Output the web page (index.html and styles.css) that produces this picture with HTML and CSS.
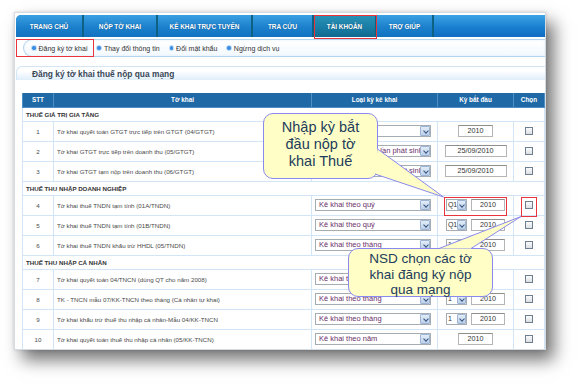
FILE: index.html
```html
<!DOCTYPE html>
<html lang="vi">
<head>
    <meta charset="UTF-8">
    <meta name="viewport" content="width=device-width, initial-scale=1.0">
    <title>Đăng ký tờ khai thuế nộp qua mạng</title>
    <link rel="stylesheet" href="styles.css">
</head>
<body>
    <div class="shot">
        <div class="nav">
            <a class="tab tab-home">TRANG CHỦ</a>
            <a class="tab tab-nop">NỘP TỜ KHAI</a>
            <a class="tab tab-kk">KÊ KHAI TRỰC TUYẾN</a>
            <a class="tab tab-tc">TRA CỨU</a>
            <a class="tab tab-tk active">TÀI KHOẢN</a>
            <a class="tab tab-help">TRỢ GIÚP</a>
            <span class="tab-fill"></span>
        </div>

        <div class="subnav">
            <span class="sub-item">Đăng ký tờ khai</span>
            <span class="sub-item">Thay đổi thông tin</span>
            <span class="sub-item">Đổi mật khẩu</span>
            <span class="sub-item">Ngừng dịch vụ</span>
        </div>

        <div class="main">
            <div class="title">Đăng ký tờ khai thuế nộp qua mạng</div>

            <table class="grid">
                <colgroup>
                    <col class="c-stt">
                    <col class="c-name">
                    <col class="c-type">
                    <col class="c-ky">
                    <col class="c-chk">
                </colgroup>
                <thead>
                    <tr>
                        <th>STT</th>
                        <th>Tờ khai</th>
                        <th>Loại kỳ kê khai</th>
                        <th>Kỳ bắt đầu</th>
                        <th>Chọn</th>
                    </tr>
                </thead>
                <tbody>
                    <tr class="group"><td colspan="5">THUẾ GIÁ TRỊ GIA TĂNG</td></tr>
                    <tr>
                        <td class="stt">1</td>
                        <td class="name">Tờ khai quyết toán GTGT trực tiếp trên GTGT (04/GTGT)</td>
                        <td class="type"><span class="sel wide"><span class="txt">Kê khai theo năm</span><span class="arr"></span></span></td>
                        <td class="ky"><span class="inp year">2010</span></td>
                        <td class="chk"><span class="cb"></span></td>
                    </tr>
                    <tr>
                        <td class="stt">2</td>
                        <td class="name">Tờ khai GTGT trực tiếp trên doanh thu (05/GTGT)</td>
                        <td class="type"><span class="sel wide"><span class="txt">Kê khai theo từng lần phát sinh</span><span class="arr"></span></span></td>
                        <td class="ky"><span class="inp date">25/09/2010</span></td>
                        <td class="chk"><span class="cb"></span></td>
                    </tr>
                    <tr>
                        <td class="stt">3</td>
                        <td class="name">Tờ khai GTGT tạm nộp trên doanh thu (06/GTGT)</td>
                        <td class="type"><span class="sel wide"><span class="txt">Kê khai theo từng lần phát sinh</span><span class="arr"></span></span></td>
                        <td class="ky"><span class="inp date">25/09/2010</span></td>
                        <td class="chk"><span class="cb"></span></td>
                    </tr>

                    <tr class="group"><td colspan="5">THUẾ THU NHẬP DOANH NGHIỆP</td></tr>
                    <tr>
                        <td class="stt">4</td>
                        <td class="name">Tờ khai thuế TNDN tạm tính (01A/TNDN)</td>
                        <td class="type"><span class="sel wide"><span class="txt">Kê khai theo quý</span><span class="arr"></span></span></td>
                        <td class="ky"><span class="pair"><span class="sel small"><span class="txt">Q1</span><span class="arr"></span></span><span class="inp short">2010</span></span></td>
                        <td class="chk"><span class="cb"></span></td>
                    </tr>
                    <tr>
                        <td class="stt">5</td>
                        <td class="name">Tờ khai thuế TNDN tạm tính (01B/TNDN)</td>
                        <td class="type"><span class="sel wide"><span class="txt">Kê khai theo quý</span><span class="arr"></span></span></td>
                        <td class="ky"><span class="pair"><span class="sel small"><span class="txt">Q1</span><span class="arr"></span></span><span class="inp short">2010</span></span></td>
                        <td class="chk"><span class="cb"></span></td>
                    </tr>
                    <tr>
                        <td class="stt">6</td>
                        <td class="name">Tờ khai thuế TNDN khấu trừ HHDL (05/TNDN)</td>
                        <td class="type"><span class="sel wide"><span class="txt">Kê khai theo tháng</span><span class="arr"></span></span></td>
                        <td class="ky"><span class="pair"><span class="sel small"><span class="txt">1</span><span class="arr"></span></span><span class="inp short">2010</span></span></td>
                        <td class="chk"><span class="cb"></span></td>
                    </tr>

                    <tr class="group"><td colspan="5">THUẾ THU NHẬP CÁ NHÂN</td></tr>
                    <tr>
                        <td class="stt">7</td>
                        <td class="name">Tờ khai quyết toán 04/TNCN (dùng QT cho năm 2008)</td>
                        <td class="type"><span class="sel wide"><span class="txt">Kê khai theo năm</span><span class="arr"></span></span></td>
                        <td class="ky"><span class="inp year">2010</span></td>
                        <td class="chk"><span class="cb"></span></td>
                    </tr>
                    <tr>
                        <td class="stt">8</td>
                        <td class="name">TK - TNCN mẫu 07/KK-TNCN theo tháng (Cá nhân tự khai)</td>
                        <td class="type"><span class="sel wide"><span class="txt">Kê khai theo tháng</span><span class="arr"></span></span></td>
                        <td class="ky"><span class="pair"><span class="sel small"><span class="txt">1</span><span class="arr"></span></span><span class="inp short">2010</span></span></td>
                        <td class="chk"><span class="cb"></span></td>
                    </tr>
                    <tr>
                        <td class="stt">9</td>
                        <td class="name">Tờ khai khấu trừ thuế thu nhập cá nhân-Mẫu 04/KK-TNCN</td>
                        <td class="type"><span class="sel wide"><span class="txt">Kê khai theo tháng</span><span class="arr"></span></span></td>
                        <td class="ky"><span class="pair"><span class="sel small"><span class="txt">1</span><span class="arr"></span></span><span class="inp short">2010</span></span></td>
                        <td class="chk"><span class="cb"></span></td>
                    </tr>
                    <tr>
                        <td class="stt">10</td>
                        <td class="name">Tờ khai quyết toán thuế thu nhập cá nhân (05/KK-TNCN)</td>
                        <td class="type"><span class="sel wide"><span class="txt">Kê khai theo năm</span><span class="arr"></span></span></td>
                        <td class="ky"><span class="inp year">2010</span></td>
                        <td class="chk"><span class="cb"></span></td>
                    </tr>
                </tbody>
            </table>
        </div>
    </div>

    <!-- red highlight frames -->
    <span class="mark mark-tab"></span>
    <span class="mark mark-sub"></span>
    <span class="mark mark-ky"></span>
    <span class="mark mark-chk"></span>

    <!-- callouts -->
    <div class="callout callout-ky">Nhập kỳ bắt<br>đầu nộp tờ<br>khai Thuế</div>
    <div class="callout callout-chk">NSD chọn các tờ<br>khai đăng ký nộp<br>qua mạng</div>
    <svg class="tails" width="581" height="386" viewBox="0 0 581 386">
        <path d="M377.5 149 L443.5 197 L375 174" fill="#fefec6" stroke="#8a8aee" stroke-width="1"/>
        <path d="M439 248.5 L521 216.5 L471 248.5" fill="#fefec6" stroke="#8a8aee" stroke-width="1"/>
    </svg>
</body>
</html>
```

FILE: styles.css
```css
* {
    margin: 0;
    padding: 0;
    box-sizing: border-box;
}

body {
    width: 581px;
    height: 386px;
    overflow: hidden;
    position: relative;
    background: #ffffff;
    font-family: "Liberation Sans", Arial, sans-serif;
    color: #333;
}

/* screenshot frame */
.shot {
    margin: 12px 0 0 14px;
    width: 532px;
    height: 338px;
    padding: 2px 0 0 1px;
    background: #fff;
    border: 1px solid #d5dbe2;
    box-shadow: 0 0 3px rgba(0, 0, 0, 0.15), 8px 10px 16px rgba(0, 0, 0, 0.55);
    overflow: hidden;
}

/* top menu */
.nav {
    display: flex;
    height: 22px;
    border-radius: 5px 0 0 0;
    overflow: hidden;
    background: linear-gradient(#3ea4e6, #1a7fd0 55%, #0f6cc2);
}

.tab {
    display: flex;
    align-items: center;
    justify-content: center;
    height: 100%;
    color: #fff;
    font-size: 6.4px;
    font-weight: bold;
    text-shadow: 0 0 1px rgba(0, 40, 80, 0.6);
    border-right: 2px solid #0d6283;
    background: linear-gradient(#3aa0e2, #1c80cc 55%, #1272c0);
}

.tab-home { width: 68px; }
.tab-nop { width: 74px; }
.tab-kk { width: 95px; }
.tab-tc { width: 61px; }
.tab-tk { width: 63px; }
.tab-help { width: 57px; }

.tab.active {
    background: linear-gradient(#2a93b8, #1a7ea6 55%, #12698f);
}

.tab-fill {
    flex: 1;
}

/* sub menu */
.subnav {
    display: flex;
    align-items: center;
    gap: 10px;
    height: 18px;
    margin: 2px 0 0 7px;
    padding-left: 8px;
    border: 1px solid #b4d5ef;
    border-right: none;
    border-radius: 9px 0 0 9px;
    background: linear-gradient(#ffffff, #f3f9fe);
    box-shadow: inset 0 0 2px #d9ebf9;
}

.sub-item {
    display: flex;
    align-items: center;
    gap: 3px;
    font-size: 7px;
    color: #333;
    white-space: nowrap;
}

.sub-item::before {
    content: "";
    width: 3.5px;
    height: 3.5px;
    border-radius: 50%;
    background: #3a8de0;
    box-shadow: 0 0 0 1px #c3ddf6;
}

/* content */
.main {
    padding-top: 9px;
}

.title {
    height: 14px;
    line-height: 14px;
    padding-left: 15px;
    font-size: 8.4px;
    font-weight: bold;
    color: #3a4858;
    border-top: 1px solid #d3e6f6;
    border-left: 1px solid #d3e6f6;
    border-radius: 6px 0 0 0;
    background: linear-gradient(#ffffff 30%, #dfeefb);
}

.grid {
    margin: 13px 0 0 6px;
    width: 522px;
    table-layout: fixed;
    border-collapse: collapse;
    border-left: 1px solid #74acdb;
    border-right: 1px solid #cfe3f5;
}

.c-stt { width: 31px; }
.c-name { width: 258px; }
.c-type { width: 126px; }
.c-ky { width: 76px; }
.c-chk { width: 31px; }

.grid th {
    height: 14px;
    padding: 0;
    font-size: 6.4px;
    font-weight: bold;
    color: #fff;
    background: #1e69a6;
    border: 1px solid #4f8fc3;
    border-top: none;
}

.grid td {
    height: 20px;
    padding: 0;
    font-size: 6.2px;
    color: #4a4a4a;
    border: 1px solid #d2e5f6;
    white-space: nowrap;
}

.grid .group td {
    height: 14px;
    padding-left: 3px;
    font-weight: bold;
    color: #333;
}

.stt {
    text-align: center;
}

.name {
    padding-left: 3px !important;
    overflow: hidden;
}

.type {
    padding-left: 3px !important;
}

.ky,
.chk {
    text-align: center;
}

/* fake form controls */
.sel {
    display: inline-flex;
    align-items: center;
    height: 12px;
    border: 1px solid #a5acb2;
    background: #fff;
    vertical-align: middle;
}

.sel .txt {
    flex: 1;
    overflow: hidden;
    padding-left: 3px;
    font-size: 7.5px;
    line-height: 10px;
    color: #6b2f6b;
    text-align: left;
}

.sel .arr {
    position: relative;
    flex: none;
    width: 10px;
    height: 10px;
    border: 1px solid #9db4d4;
    border-radius: 1px;
    background: linear-gradient(#e3edf9, #bccfe8);
}

.sel .arr::after {
    content: "";
    position: absolute;
    left: 2.5px;
    top: 1.5px;
    width: 3px;
    height: 3px;
    border-right: 1.3px solid #37547f;
    border-bottom: 1.3px solid #37547f;
    transform: rotate(45deg);
}

.sel.wide {
    width: 116px;
}

.sel.small {
    width: 21px;
}

.sel.small .txt {
    padding-left: 1px;
    font-size: 7px;
    letter-spacing: -0.3px;
    color: #333;
}

.sel.small .arr {
    width: 9px;
}

.sel.small .arr::after {
    left: 2px;
}

.inp {
    display: inline-block;
    height: 12px;
    line-height: 10px;
    border: 1px solid #b5b5b5;
    border-top-color: #8e8e8e;
    background: #fff;
    font-size: 7.2px;
    color: #333;
    text-align: center;
    vertical-align: middle;
}

.inp.year { width: 35px; }
.inp.date { width: 62px; }
.inp.short { width: 34px; }

.pair {
    display: inline-flex;
    gap: 4px;
    vertical-align: middle;
}

.cb {
    display: inline-block;
    width: 8px;
    height: 8px;
    border: 1px solid #6f7f90;
    background: linear-gradient(#fbfbfb, #dcdfe3);
    vertical-align: middle;
}

/* overlays */
.mark {
    position: absolute;
    border: 1.5px solid #e8343a;
}

.mark-tab { left: 314px; top: 15px; width: 63px; height: 24px; }
.mark-sub { left: 16px; top: 39px; width: 78px; height: 18px; }
.mark-ky { left: 444px; top: 197px; width: 63px; height: 19px; }
.mark-chk { left: 521px; top: 197px; width: 16px; height: 20px; }

.callout {
    position: absolute;
    text-align: center;
    color: #223c5c;
    background: #fefec6;
    border: 1px solid #8a8aee;
    border-radius: 10px;
}

.callout-ky {
    left: 263px;
    top: 113px;
    width: 115px;
    height: 66px;
    padding-top: 5px;
    font-size: 14.5px;
    line-height: 17px;
}

.callout-chk {
    left: 348px;
    top: 248px;
    width: 145px;
    height: 49px;
    padding-top: 2px;
    font-size: 13.5px;
    line-height: 15.5px;
}

.tails {
    position: absolute;
    left: 0;
    top: 0;
    pointer-events: none;
}
```
